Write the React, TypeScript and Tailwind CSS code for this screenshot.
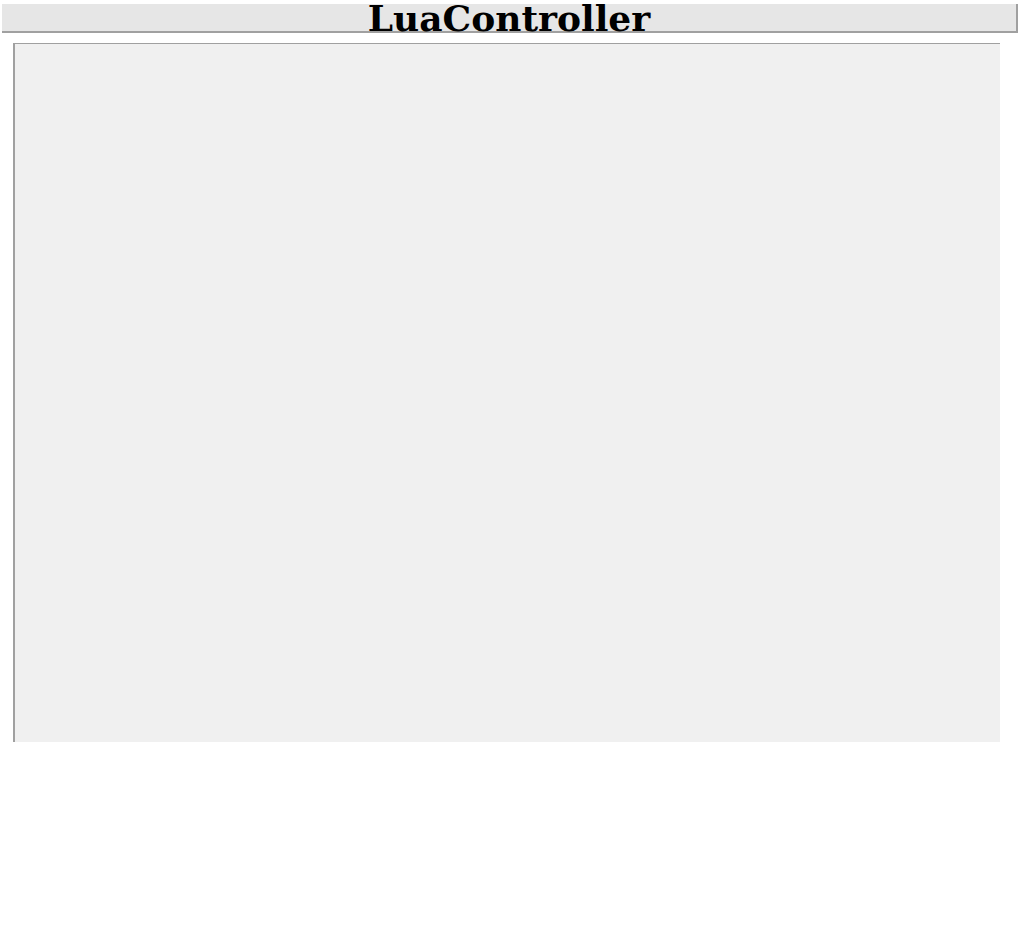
export default function App() {
  return (
    <div className="w-[1019px] h-[928px] bg-white">
      {/* title bar */}
      <div className="flow-root ml-[2px] mr-px mt-[4px] h-[29px] bg-[#e6e6e6] border-r-2 border-b-2 border-[#a0a0a0] text-center">
        <h1 className="font-['DejaVu_Serif',serif] font-bold text-[36px] leading-none text-black -mt-[4px]">
          LuaController
        </h1>
      </div>

      {/* editor area */}
      <div className="ml-[13px] mt-[10px] w-[987px] h-[699px] bg-[#f0f0f0] border-l-2 border-t border-[#a0a0a0]" />
    </div>
  );
}
